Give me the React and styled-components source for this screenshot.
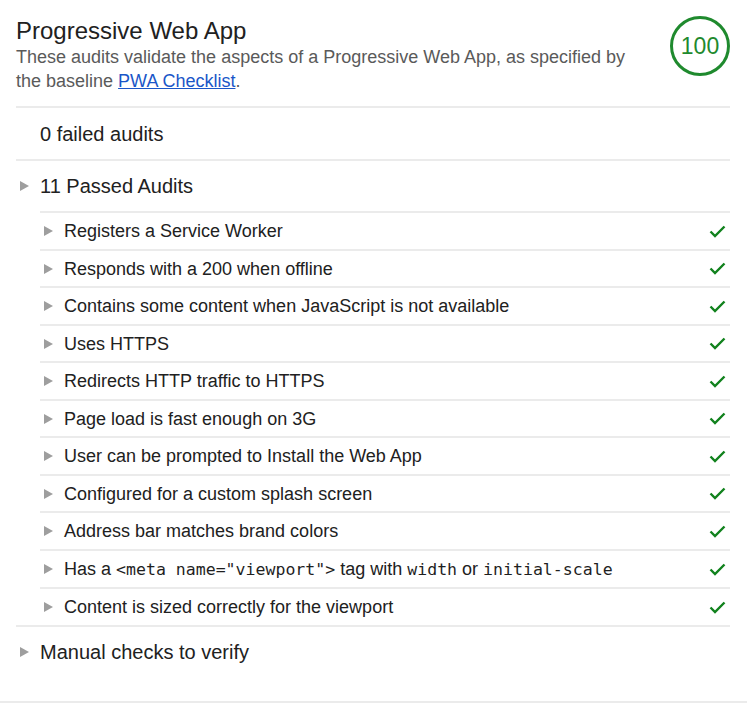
import React from "react";
import styled, { createGlobalStyle } from "styled-components";

const GlobalStyle = createGlobalStyle`
  body {
    margin: 0;
    background: #fff;
    font-family: "Liberation Sans", Arial, sans-serif;
    color: #212121;
  }
`;

const Category = styled.div`
  padding: 0 17px 0 16px;
  border-bottom: 2px solid #ebebeb;
`;

const Header = styled.div`
  display: flex;
  justify-content: space-between;
  align-items: flex-start;
  padding: 16px 0 13px;
  border-bottom: 2px solid #ebebeb;
`;

const HeaderText = styled.div`
  flex: 1;
  margin-right: 30px;
`;

const Title = styled.h2`
  margin: 0;
  font-size: 24px;
  line-height: 29px;
  font-weight: normal;
  color: #212121;
`;

const Description = styled.p`
  margin: 0;
  font-size: 18px;
  line-height: 24px;
  color: #5a5a5a;

  a {
    color: #1a56c8;
    text-decoration: underline;
  }
`;

const Gauge = styled.div`
  width: 60px;
  height: 60px;
  box-sizing: border-box;
  border: 3px solid #1f8a2e;
  border-radius: 50%;
  display: flex;
  align-items: center;
  justify-content: center;
  font-size: 23px;
  color: #1f8a2e;
`;

const GroupHeader = styled.div`
  display: flex;
  align-items: center;
  font-size: 20px;
  line-height: 24px;
  color: #212121;
  padding: ${(p) => (p.$expandable ? "13px 0 13px" : "14px 0 13px 24px")};
  padding-bottom: ${(p) => (p.$last ? "37px" : undefined)};
  border-bottom: ${(p) => (p.$expandable ? "none" : "2px solid #ebebeb")};
`;

const Group = styled.div`
  border-bottom: 2px solid #ebebeb;
`;

const Arrow = styled.span`
  width: 0;
  height: 0;
  margin: 0 11px 0 4px;
  border-top: 5px solid transparent;
  border-bottom: 5px solid transparent;
  border-left: 9px solid #9e9e9e;
`;

const AuditList = styled.div`
  margin-left: 24px;
`;

const Audit = styled.div`
  display: flex;
  align-items: center;
  padding: 8px 4px 7.5px 0;
  border-top: 2px solid #ebebeb;
  font-size: 18px;
  line-height: 20px;
  color: #212121;
`;

const AuditTitle = styled.span`
  flex: 1;
`;

const Code = styled.code`
  font-family: "DejaVu Sans Mono", monospace;
  font-size: 0.92em;
  color: #1f1f1f;
`;

const audits = [
  "Registers a Service Worker",
  "Responds with a 200 when offline",
  "Contains some content when JavaScript is not available",
  "Uses HTTPS",
  "Redirects HTTP traffic to HTTPS",
  "Page load is fast enough on 3G",
  "User can be prompted to Install the Web App",
  "Configured for a custom splash screen",
  "Address bar matches brand colors",
  "viewport",
  "Content is sized correctly for the viewport",
];

const ViewportTitle = () => (
  <>
    Has a <Code>&lt;meta name="viewport"&gt;</Code> tag with <Code>width</Code> or{" "}
    <Code>initial-scale</Code>
  </>
);

const Check = () => (
  <svg width="17" height="13" viewBox="0 0 17 13">
    <path d="M1.5 6.5 L6 11 L15.5 1.5" fill="none" stroke="#11821d" strokeWidth="2.4" />
  </svg>
);

const App = () => {
  return (
    <Category>
      <GlobalStyle />
      <Header>
        <HeaderText>
          <Title>Progressive Web App</Title>
          <Description>
            These audits validate the aspects of a Progressive Web App, as specified by the
            baseline <a href="#checklist">PWA Checklist</a>.
          </Description>
        </HeaderText>
        <Gauge>100</Gauge>
      </Header>

      <GroupHeader>0 failed audits</GroupHeader>

      <Group>
        <GroupHeader $expandable>
          <Arrow />
          11 Passed Audits
        </GroupHeader>
        <AuditList>
          {audits.map((title) => (
            <Audit key={title}>
              <Arrow />
              <AuditTitle>{title === "viewport" ? <ViewportTitle /> : title}</AuditTitle>
              <Check />
            </Audit>
          ))}
        </AuditList>
      </Group>

      <GroupHeader $expandable $last>
        <Arrow />
        Manual checks to verify
      </GroupHeader>
    </Category>
  );
};

export default App;
